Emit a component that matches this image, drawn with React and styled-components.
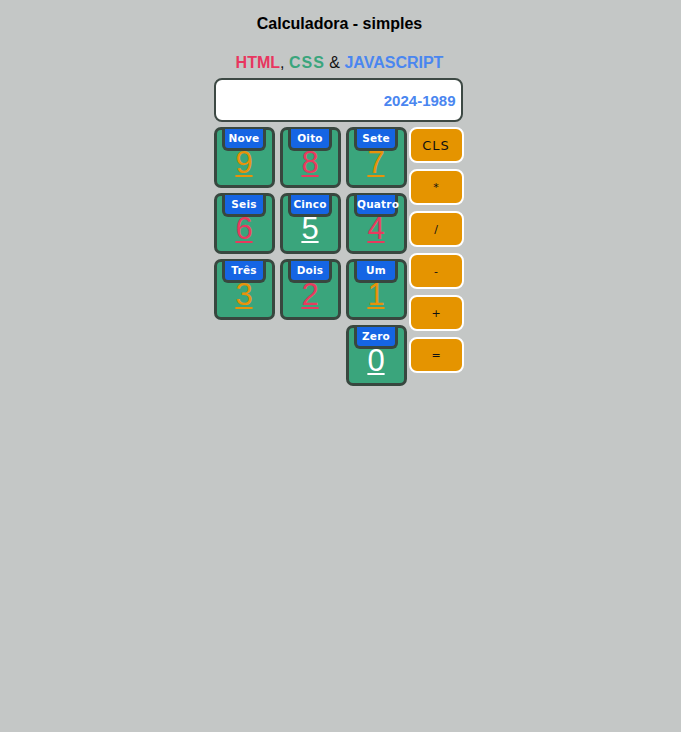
import React, { useState } from "react";
import styled, { createGlobalStyle } from "styled-components";

const GlobalStyle = createGlobalStyle`
  html, body {
    margin: 0;
    padding: 0;
    background: #c4c7c6;
    font-family: "Liberation Sans", Arial, sans-serif;
  }
`;

const keys = [
  { label: "Nove", digit: "9", color: "#e8920a" },
  { label: "Oito", digit: "8", color: "#e83a5e" },
  { label: "Sete", digit: "7", color: "#e8920a" },
  { label: "Seis", digit: "6", color: "#e83a5e" },
  { label: "Cinco", digit: "5", color: "#ffffff" },
  { label: "Quatro", digit: "4", color: "#e83a5e" },
  { label: "Três", digit: "3", color: "#e8920a" },
  { label: "Dois", digit: "2", color: "#e83a5e" },
  { label: "Um", digit: "1", color: "#e8920a" },
  null,
  null,
  { label: "Zero", digit: "0", color: "#ffffff" },
];

const ops = ["CLS", "*", "/", "-", "+", "="];

export default function App() {
  const [value, setValue] = useState("2024-1989");

  return (
    <>
      <GlobalStyle />
      <Page>
        <Title>Calculadora - simples</Title>
        <Subtitle>
          <Html>HTML</Html>, <Css>CSS</Css> &amp; <Js>JAVASCRIPT</Js>
        </Subtitle>
        <Display
          value={value}
          onChange={(e) => setValue(e.target.value)}
        />
        <Pad>
          <Digits>
            {keys.map((k, i) =>
              k ? (
                <Key key={i}>
                  <Tab>{k.label}</Tab>
                  <Digit color={k.color}>{k.digit}</Digit>
                </Key>
              ) : (
                <div key={i} />
              )
            )}
          </Digits>
          <Ops>
            {ops.map((o) => (
              <Op key={o} big={o === "CLS"}>
                {o}
              </Op>
            ))}
          </Ops>
        </Pad>
      </Page>
    </>
  );
}

const Page = styled.div`
  width: 250px;
  margin: 0 auto;
  padding-top: 15px;
  display: flex;
  flex-direction: column;
  transform: translateX(-2px);
`;

const Title = styled.div`
  font-size: 16px;
  font-weight: bold;
  line-height: 18px;
  text-align: center;
  color: #000;
  transform: translateX(1px);
`;

const Subtitle = styled.div`
  margin-top: 21px;
  font-size: 16px;
  font-weight: normal;
  line-height: 18px;
  text-align: center;
  color: #111;
  transform: translateX(1px);
`;

const Html = styled.span`
  font-weight: bold;
  color: #e8365f;
`;

const Css = styled.span`
  font-weight: bold;
  color: #3aa57c;
  letter-spacing: 1px;
`;

const Js = styled.span`
  font-weight: bold;
  color: #4a86f0;
`;

const Display = styled.input`
  margin-top: 6px;
  height: 44px;
  width: 249px;
  box-sizing: border-box;
  border: 2px solid #3d4944;
  border-radius: 8px;
  background: #fff;
  text-align: right;
  padding: 0 5px 0 6px;
  font-family: "Liberation Sans", Arial, sans-serif;
  font-weight: bold;
  font-size: 15px;
  color: #4a86f0;
  outline: none;
`;

const Pad = styled.div`
  margin-top: 5px;
  display: flex;
  gap: 2px;
`;

const Digits = styled.div`
  display: grid;
  grid-template-columns: repeat(3, 61px);
  grid-auto-rows: 61px;
  gap: 5px;
`;

const Key = styled.div`
  box-sizing: border-box;
  border: 3px solid #38473f;
  border-radius: 7px;
  background: #3aa57c;
  display: flex;
  flex-direction: column;
  align-items: center;
  cursor: pointer;
`;

const Tab = styled.div`
  margin-top: -1px;
  width: 44px;
  height: 22px;
  box-sizing: border-box;
  border: 3px solid #38473f;
  border-top: none;
  border-radius: 0 0 6px 6px;
  background: #1565e4;
  color: #fff;
  font-family: "DejaVu Sans", Verdana, sans-serif;
  font-weight: bold;
  font-size: 10.5px;
  line-height: 19px;
  text-align: center;
  letter-spacing: 0.2px;
  white-space: nowrap;
`;

const Digit = styled.div`
  margin-top: -4px;
  font-family: "Liberation Sans", Arial, sans-serif;
  font-size: 31px;
  line-height: 32px;
  color: ${(p) => p.color};
  text-decoration: underline;
  text-decoration-thickness: 2px;
  text-underline-offset: 2px;
`;

const Ops = styled.div`
  display: flex;
  flex-direction: column;
  gap: 6px;
`;

const Op = styled.button`
  width: 55px;
  height: 36px;
  box-sizing: border-box;
  border: 2px solid #ffffff;
  border-radius: 8px;
  background: #e59400;
  color: #111;
  font-family: "DejaVu Sans", Verdana, sans-serif;
  font-size: ${(p) => (p.big ? "13px" : "11px")};
  letter-spacing: ${(p) => (p.big ? "1px" : "0")};
  padding: 0;
  cursor: pointer;
`;
